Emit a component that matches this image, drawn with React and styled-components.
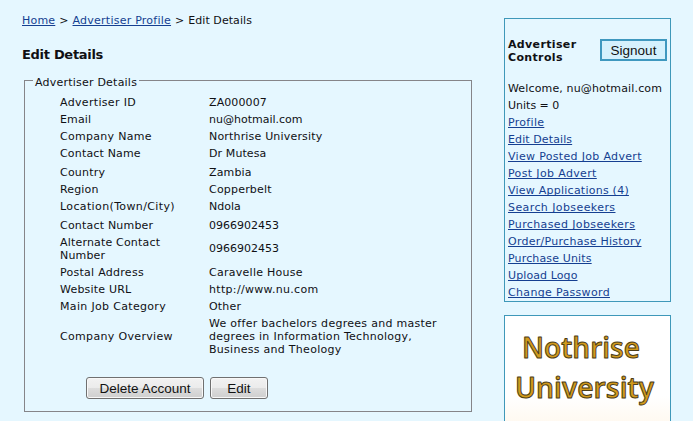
import React from "react";
import styled, { createGlobalStyle } from "styled-components";

const GlobalStyle = createGlobalStyle`
  * { box-sizing: border-box; }
  html, body { margin: 0; height: 421px; overflow: hidden; background: #e5f7ff; }
  body { font: 11px/13px Verdana, "DejaVu Sans", sans-serif; color: #101014; }
`;

const Page = styled.div`
  display: flex;
  align-items: flex-start;
  width: 693px;
  height: 421px;
  overflow: hidden;
`;

const Main = styled.main`
  width: 504px;
  padding: 14px 0 0 22px;
`;

const Label = styled.span`
  display: inline-block;
  white-space: nowrap;
  letter-spacing: ${(p) => p.$track || 0}px;
`;

const Link = styled.a`
  color: #153f91;
  letter-spacing: ${(p) => p.$track || 0}px;
  text-decoration: underline;
  text-decoration-skip-ink: none;
  text-decoration-thickness: 1px;
  text-underline-offset: 1px;
  white-space: nowrap;
`;

const Breadcrumb = styled.nav`
  display: flex;
  gap: 4px;
  height: 13px;
`;

const Title = styled.h1`
  margin: 20px 0 0;
  font-size: 13px;
  line-height: 16px;
  letter-spacing: -0.3px;
`;

const Details = styled.fieldset`
  width: 448px;
  height: 338px;
  margin: 11px 0 0 2px;
  padding: 7px 0 0 35px;
  border: 1px solid #858589;
  border-radius: 0;
`;

const Legend = styled.legend`
  margin-left: -27px;
  padding: 2px 2px 0;
  height: 13px;
  letter-spacing: 0.22px;
`;

const Row = styled.div`
  display: grid;
  grid-template-columns: 149px 240px;
  align-items: center;
  height: ${(p) => p.$height || 17}px;
  margin-top: ${(p) => p.$gap || 0}px;
`;

const Actions = styled.div`
  display: flex;
  gap: 6px;
  margin: 19px 0 0 26px;
`;

const Button = styled.button`
  width: ${(p) => p.$width}px;
  height: 22px;
  padding: 1px 0 0;
  border: 1px solid #707070;
  border-radius: 3px;
  box-shadow: inset 0 0 0 1px #f8f8f8;
  background: linear-gradient(#f2f2f2, #ebebeb 50%, #dddddd 50%, #cfcfcf);
  color: #111;
  font: 13.5px/19px Arial, "Liberation Sans", sans-serif;
`;

const SignoutButton = styled(Button)`
  border: 2px solid #3f98bf;
  border-radius: 0;
  box-shadow: none;
  background: #d5f1fd;
  line-height: 17px;
`;

const Sidebar = styled.aside`
  display: flex;
  flex-direction: column;
  gap: 13px;
  width: 167px;
  padding-top: 18px;
`;

const Controls = styled.section`
  height: 284px;
  padding: 20px 3px 0;
  border: 1px solid #3f98b9;
`;

const ControlsHeader = styled.div`
  display: flex;
  justify-content: space-between;
  height: 41px;
`;

const ControlsTitle = styled.h2`
  margin: -1px 0 0;
  font-size: 11px;
  line-height: 13px;
  letter-spacing: 0.35px;
`;

const List = styled.div`
  display: flex;
  flex-direction: column;
  line-height: 17px;
`;

const Item = styled.div`
  height: 17px;
  white-space: nowrap;
`;

const LogoCard = styled.section`
  height: 130px;
  flex: none;
  border: 1px solid #3f98b9;
  background: linear-gradient(#fff 80px, #fff8ed 112px);
`;

const Wordmark = styled.svg`
  display: block;
  font: 600 29px "Open Sans", "Noto Sans", sans-serif;
  fill: #d29a1c;
  stroke: #4c3d18;
  stroke-width: 1px;
  stroke-linejoin: round;
`;

const rows = [
  { label: "Advertiser ID", track: 0.33, value: "ZA000007", valueTrack: 0.1 },
  { label: "Email", track: 0.15, value: "nu@hotmail.com" },
  { label: "Company Name", track: 0.3, value: "Northrise University", valueTrack: 0.18 },
  { label: "Contact Name", track: 0.17, value: "Dr Mutesa", valueTrack: 0.1 },
  { label: "Country", track: 0.2, value: "Zambia", valueTrack: 0.15, gap: 2 },
  { label: "Region", track: 0.15, value: "Copperbelt", valueTrack: 0.2 },
  { label: "Location(Town/City)", track: 0.37, value: "Ndola" },
  { label: "Contact Number", track: 0.2, value: "0966902453", gap: 2 },
  { label: <>Alternate Contact<br />Number</>, track: 0.18, value: "0966902453", height: 29 },
  { label: "Postal Address", track: 0.27, value: "Caravelle House", valueTrack: 0.27, gap: 1 },
  { label: "Website URL", track: 0.2, value: "http://www.nu.com", valueTrack: 0.32 },
  { label: "Main Job Category", track: 0.33, value: "Other", valueTrack: 0.2 },
  {
    label: "Company Overview",
    track: 0.33,
    value: <>We offer bachelors degrees and master<br />degrees in Information Technology,<br />Business and Theology</>,
    valueTrack: 0.28,
    height: 43,
  },
];

const links = [
  ["Profile", 0.3],
  ["Edit Details", 0.1],
  ["View Posted Job Advert", 0.32],
  ["Post Job Advert", 0.36],
  ["View Applications (4)", 0.24],
  ["Search Jobseekers", 0.41],
  ["Purchased Jobseekers", 0.38],
  ["Order/Purchase History", 0.27],
  ["Purchase Units", 0.15],
  ["Upload Logo", 0.1],
  ["Change Password", 0.33],
];

export default function App() {
  return (
    <>
      <GlobalStyle />
      <Page>
        <Main>
          <Breadcrumb>
            <Link $track={0.2}>Home</Link>
            <span>&gt;</span>
            <Link $track={0.24}>Advertiser Profile</Link>
            <span>&gt;</span>
            <Label $track={0.06}>Edit Details</Label>
          </Breadcrumb>
          <Title>Edit Details</Title>
          <Details>
            <Legend>Advertiser Details</Legend>
            {rows.map((r, i) => (
              <Row key={i} $height={r.height} $gap={r.gap}>
                <Label $track={r.track}>{r.label}</Label>
                <Label $track={r.valueTrack}>{r.value}</Label>
              </Row>
            ))}
            <Actions>
              <Button $width={118}>Delete Account</Button>
              <Button $width={58}>Edit</Button>
            </Actions>
          </Details>
        </Main>
        <Sidebar>
          <Controls>
            <ControlsHeader>
              <ControlsTitle>Advertiser<br />Controls</ControlsTitle>
              <SignoutButton $width={67}>Signout</SignoutButton>
            </ControlsHeader>
            <List>
              <Item><Label $track={0.14}>Welcome, nu@hotmail.com</Label></Item>
              <Item>Units = 0</Item>
              {links.map(([text, track]) => (
                <Item key={text}><Link $track={track}>{text}</Link></Item>
              ))}
            </List>
          </Controls>
          <LogoCard>
            <Wordmark width="165" height="106">
              <text x="17" y="42" textLength="118" lengthAdjust="spacingAndGlyphs">Nothrise</text>
              <text x="10" y="82" textLength="139" lengthAdjust="spacingAndGlyphs">University</text>
            </Wordmark>
          </LogoCard>
        </Sidebar>
      </Page>
    </>
  );
}
